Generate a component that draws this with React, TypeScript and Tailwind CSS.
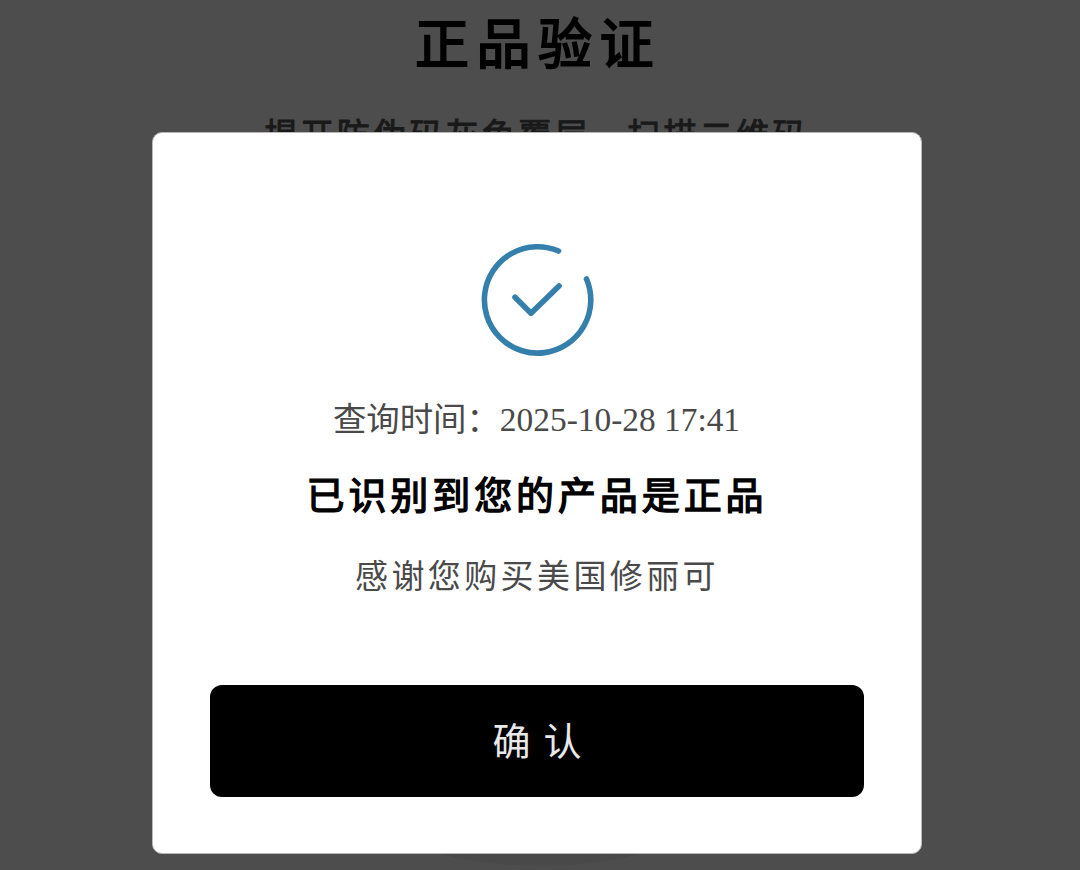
function SuccessIcon() {
  return (
    <svg
      viewBox="0 0 120 120"
      className="block size-[120px]"
      fill="none"
      stroke="#357fac"
      strokeWidth="5.6"
      strokeLinecap="round"
      strokeLinejoin="round"
    >
      <path d="M81.5 11A53.2 53.2 0 1 0 109.5 39" />
      <path d="M38 57.3L54 73.3L82 46" />
    </svg>
  );
}

function VerificationPage() {
  return (
    <main className="relative flex h-[870px] w-[1080px] flex-col items-center overflow-hidden bg-white">
      <h1 className="mt-[6px] pr-[4px] text-[54px] leading-[80px] font-normal tracking-[7.5px] whitespace-nowrap text-black [-webkit-text-stroke:2px_black]">
        正品验证
      </h1>
      <p className="mt-[26px] pr-[7px] text-[33px] leading-[48px] font-normal tracking-[3.3px] whitespace-nowrap text-[#555] [-webkit-text-stroke:1px_#555]">
        揭开防伪码灰色覆层，扫描二维码
      </p>
      <div className="mt-auto mb-[4px] h-[160px] w-[380px] rounded-[50%] bg-[#f0f0f0]" />
    </main>
  );
}

function ResultDialog() {
  return (
    <section
      role="dialog"
      className="mt-[132px] ml-[152px] flex h-[722px] w-[770px] flex-col items-center rounded-[10px] border border-[#b8b8b8] bg-white px-[57px] pt-[107px]"
    >
      <SuccessIcon />
      <p className="mt-[35px] pr-[1px] text-[33.4px] leading-[50px] whitespace-nowrap text-[#4a4a4a]">
        查询时间：2025-10-28 17:41
      </p>
      <h2 className="mt-[21px] text-[38px] leading-[60px] font-normal tracking-[3.9px] whitespace-nowrap text-black [-webkit-text-stroke:1.4px_black]">
        已识别到您的产品是正品
      </h2>
      <p className="mt-[26px] text-[33px] leading-[50px] tracking-[3.4px] whitespace-nowrap text-[#4a4a4a]">
        感谢您购买美国修丽可
      </p>
      <button className="mt-[83px] h-[112px] w-[654px] shrink-0 rounded-[12px] bg-black pt-[2px] pl-[13px] text-[38px] tracking-[13px] text-[#e8e8e8]">
        确认
      </button>
    </section>
  );
}

export default function App() {
  return (
    <div className="relative h-[870px] w-[1080px] overflow-hidden font-['Liberation_Serif','Noto_Sans_CJK_SC',sans-serif]">
      <VerificationPage />
      <div className="absolute inset-0 bg-[#000000b2]">
        <ResultDialog />
      </div>
    </div>
  );
}
